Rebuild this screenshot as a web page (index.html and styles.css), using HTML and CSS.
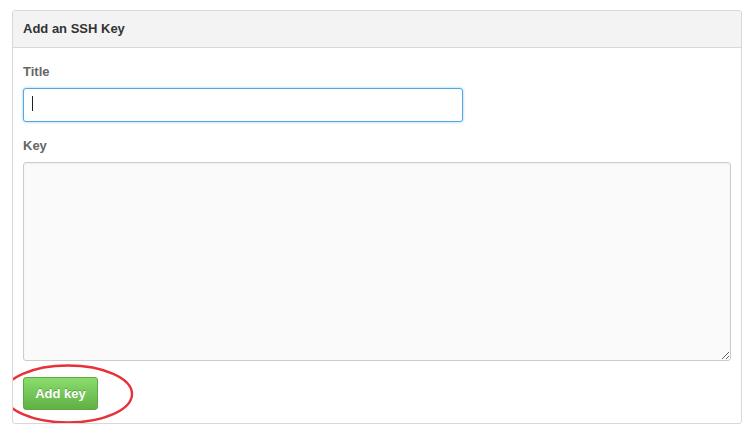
FILE: index.html
```html
<!DOCTYPE html>
<html lang="en">
<head>
  <meta charset="UTF-8" />
  <title>Add an SSH Key</title>
  <link rel="stylesheet" href="styles.css">
</head>
<body>
  <div class="boxed-group">
    <h3 class="boxed-header">Add an SSH Key</h3>

    <form class="boxed-body">
      <!-- Title -->
      <div class="form-group">
        <label class="form-label" for="keyTitle">Title</label>
        <div class="input-wrap">
          <input type="text" class="form-input is-focused" id="keyTitle">
          <span class="caret"></span>
        </div>
      </div>

      <!-- Key -->
      <div class="form-group">
        <label class="form-label" for="keyBody">Key</label>
        <textarea class="form-textarea" id="keyBody"></textarea>
      </div>

      <!-- Submit -->
      <div class="form-actions">
        <button type="button" class="btn-add">Add key</button>
        <svg class="highlight-ring" width="132" height="62" viewBox="0 0 132 62">
          <ellipse cx="66" cy="31" rx="64" ry="28.5" fill="none" stroke="#e8323a" stroke-width="2.4"/>
        </svg>
      </div>
    </form>
  </div>
</body>
</html>
```

FILE: styles.css
```css
/* Reset & font */
* {
  margin: 0;
  padding: 0;
  box-sizing: border-box;
}
body, input, textarea, button {
  font-family: "Liberation Sans", Arial, Helvetica, sans-serif;
}
body {
  background: #fff;
  color: #333;
  padding: 10px 11px 0 12px;
  font-size: 13px;
}

/* Box */
.boxed-group {
  width: 730px;
  border: 1px solid #d8d8d8;
  border-radius: 3px;
  overflow: hidden;
}
.boxed-header {
  height: 37px;
  line-height: 36px;
  padding: 0 10px;
  background-color: #f3f3f3;
  border-bottom: 1px solid #d8d8d8;
  font-size: 13px;
  font-weight: 700;
  color: #333;
}
.boxed-body {
  padding: 15px 10px 13px;
  display: flex;
  flex-direction: column;
  gap: 15px;
}

/* Fields */
.form-group {
  display: flex;
  flex-direction: column;
  gap: 7px;
}
.form-label {
  font-size: 13px;
  line-height: 18px;
  font-weight: 700;
  color: #666;
}
.input-wrap {
  position: relative;
  width: 440px;
}
.form-input {
  width: 440px;
  height: 34px;
  padding: 6px 8px;
  border: 1px solid #ccc;
  border-radius: 3px;
  font-size: 13px;
  color: #333;
  outline: none;
}
.form-input.is-focused {
  border-color: #51a7e8;
  box-shadow: 0 0 3px rgba(81, 167, 232, 0.6);
}
.caret {
  position: absolute;
  left: 9px;
  top: 8px;
  width: 1px;
  height: 15px;
  background: #222;
}
.form-textarea {
  width: 708px;
  height: 199px;
  padding: 6px 8px;
  background-color: #fafafa;
  border: 1px solid #ccc;
  border-radius: 3px;
  box-shadow: inset 0 1px 2px rgba(0, 0, 0, 0.05);
  font-size: 13px;
  resize: vertical;
  outline: none;
}

/* Button */
.form-actions {
  position: relative;
  margin-top: 1px;
}
.btn-add {
  width: 75px;
  height: 33px;
  border: 1px solid #5ca941;
  border-radius: 3px;
  background: linear-gradient(#8add6d, #60b044);
  color: #fff;
  font-size: 13px;
  font-weight: 700;
  text-shadow: 0 -1px 0 rgba(0, 0, 0, 0.25);
  cursor: pointer;
}
.highlight-ring {
  position: absolute;
  left: -21px;
  top: -14px;
  pointer-events: none;
}
```
